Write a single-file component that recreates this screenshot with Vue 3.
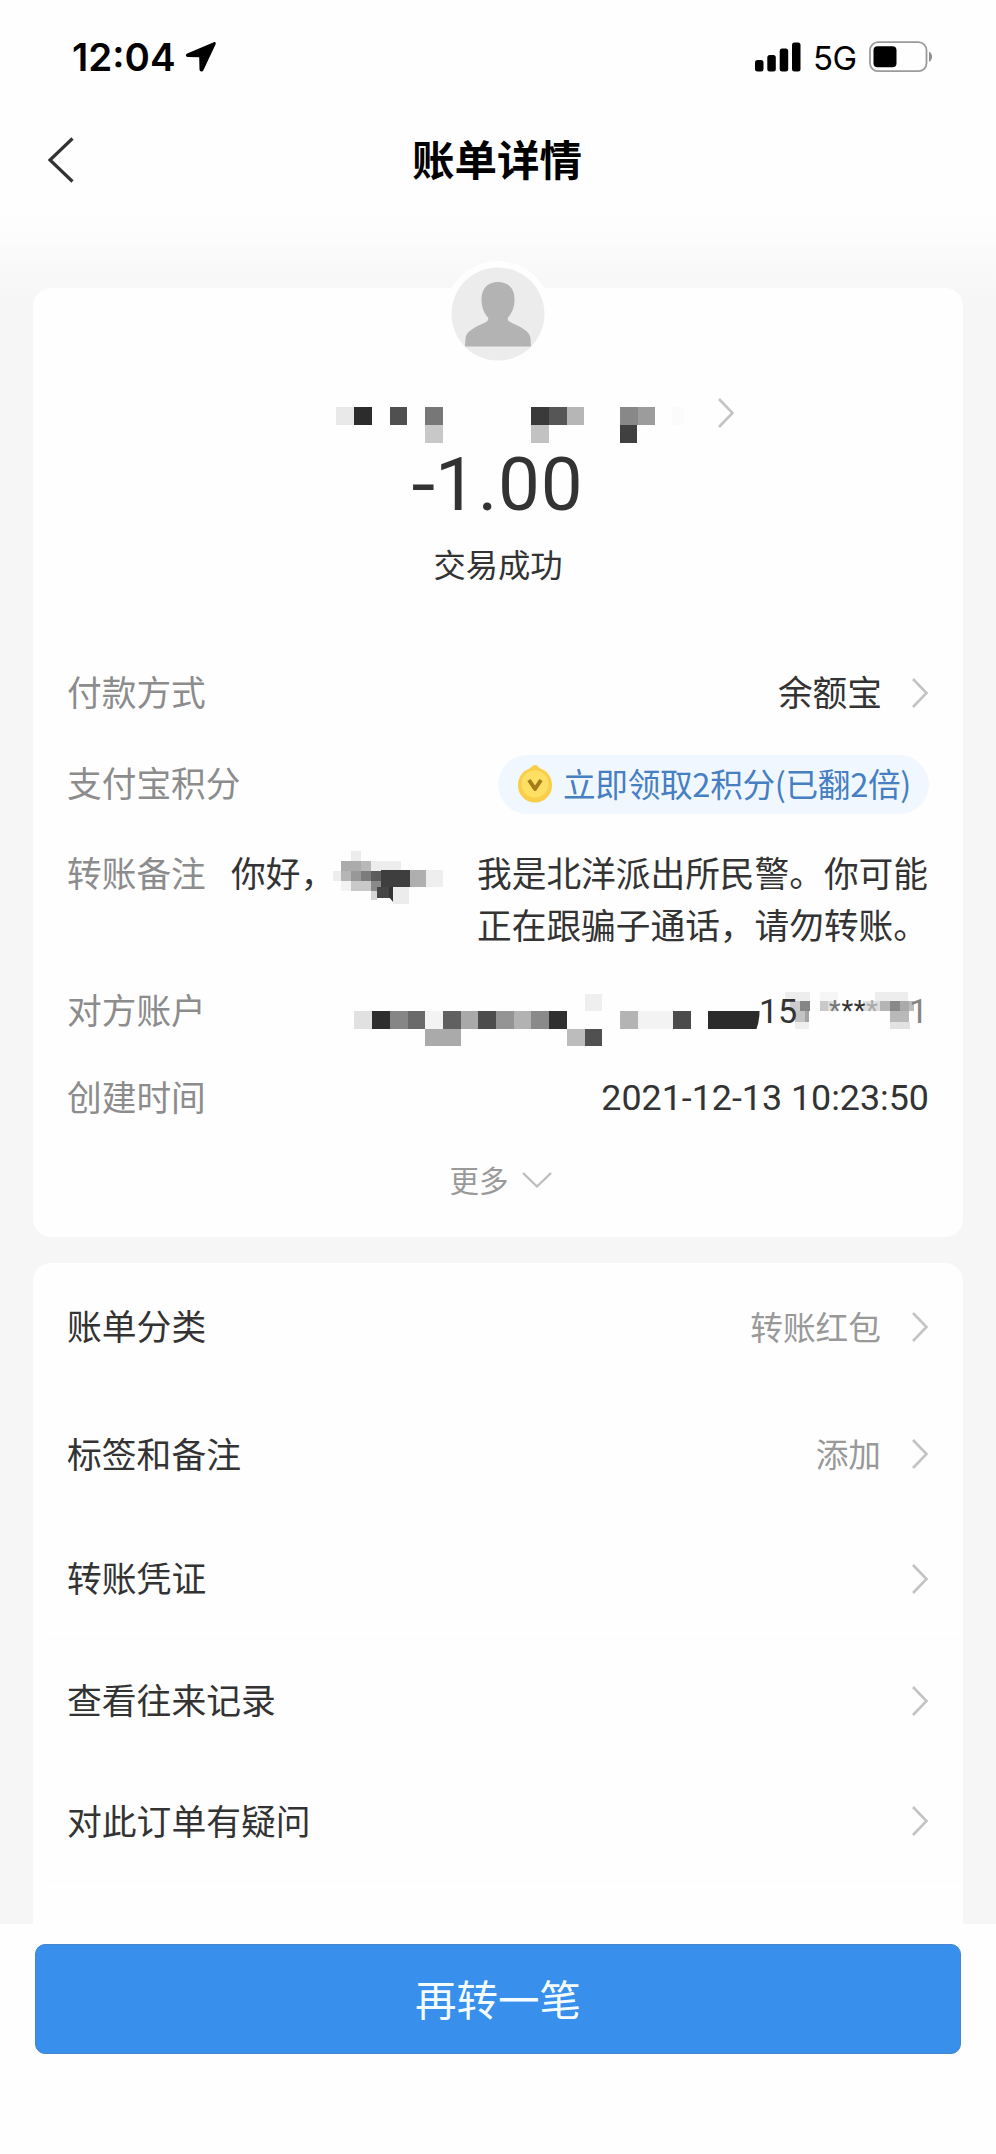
<script setup>
// Each block is [x, y, width, height, fill] inside its mosaic.
const nameBlocks = [
  [0, 0, 18, 18, '#e9e9e9'], [18, 0, 17.5, 18, '#2c2c2c'], [53.5, 0, 17.5, 18, '#505050'],
  [89, 0, 18, 18, '#777777'], [89, 18, 18, 17.5, '#c8c8c8'],
  [195, 0, 18, 18, '#3a3a3a'], [213, 0, 17.5, 18, '#565656'], [230.5, 0, 17.5, 18, '#b6b6b6'],
  [195, 18, 18, 17.5, '#c2c2c2'],
  [283.5, 0, 18, 18, '#888888'], [301.5, 0, 17.5, 18, '#9c9c9c'], [283.5, 18, 17.5, 17.5, '#404040'],
  [336, 0, 12, 18, '#fbfbfb'],
]

const noteBlocks = [
  [18, 0, 10, 10, '#ececec'], [8, 10, 20, 10, '#ababab'], [28, 10, 10, 10, '#b8b8b8'],
  [38, 10, 30, 10, '#ededed'], [0, 20, 8, 10, '#ededed'], [8, 20, 10, 10, '#b5b5b5'],
  [18, 20, 10, 10, '#989898'], [28, 20, 10, 10, '#7c7c7c'], [38, 20, 11, 10, '#5c5c5c'],
  [48, 19, 29, 17, '#3e3e3e'], [77, 19, 16, 17, '#afafaf'], [93, 19, 17, 17, '#eeeeee'],
  [8, 30, 10, 10, '#f2f2f2'], [18, 30, 20, 10, '#c9c9c9'], [38, 30, 10, 10, '#8a8a8a'],
  [38, 40, 6, 9, '#d5d5d5'], [44, 36, 16, 11, '#454545'], [60, 36, 16, 17, '#ececec'],
]

const accountBlocks = [
  [0, 17, 18, 18, '#e1e1e1'], [18, 17, 17.5, 18, '#2e2e2e'], [35.5, 17, 18, 18, '#868686'],
  [53.5, 17, 17.5, 18, '#6a6a6a'], [71, 17, 18, 18, '#f3f3f3'], [89, 17, 17.5, 18, '#606060'],
  [106.5, 17, 17.5, 18, '#a9a9a9'], [124, 17, 18, 18, '#4d4d4d'], [142, 17, 17.5, 18, '#949494'],
  [159.5, 17, 17.5, 18, '#b2b2b2'], [177, 17, 18, 18, '#8a8a8a'], [195, 17, 18, 18, '#303030'],
  [71, 35, 35.5, 17, '#aaaaaa'], [213, 35, 17.5, 17, '#bcbcbc'], [230.5, 35, 17.5, 17, '#505050'],
  [230.5, 0, 17.5, 17, '#efefef'], [266, 17, 17.5, 18, '#b4b4b4'], [283.5, 17, 35.5, 18, '#f3f3f3'],
  [319, 17, 17.5, 18, '#4b4b4b'],
]

const phoneBlocks = [
  [26, 0, 25, 9, '#ededed'], [22, 9, 9, 11, '#f0f0f0'], [31, 9, 10, 10, '#cccccc'],
  [41, 9, 10, 10, '#858585'], [36, 19, 10, 11, '#c4c4c4'], [46, 19, 4, 13, '#a4a4a4'],
  [36, 30, 14, 7, '#eeeeee'],
  [61, 9, 8, 10, '#c9c9c9'], [69, 9, 9, 10, '#dedede'], [61, 0, 18, 9, '#f6f6f6'],
  [104, 9, 17, 10, '#dedede'], [116, 0, 33, 9, '#ededed'], [121, 9, 10, 10, '#b4b4b4'],
  [131, 9, 10, 10, '#888888'], [141, 9, 9, 10, '#aaaaaa'], [150, 9, 5, 10, '#bdbdbd'],
  [131, 19, 19, 11, '#b9b9b9'], [131, 30, 20, 7, '#e2e2e2'],
]

const services = [
  { title: '账单分类', value: '转账红包', size: 'h128' },
  { title: '标签和备注', value: '添加', size: 'h127' },
  { title: '转账凭证', value: '', size: 'h122' },
  { title: '查看往来记录', value: '', size: 'h122' },
  { title: '对此订单有疑问', value: '', size: 'h119' },
]
</script>

<template>
  <div class="screen">
    <header class="status-bar">
      <span class="time">12:04</span>
      <svg class="location" width="32" height="32" viewBox="0 0 32 32">
        <path d="M28.800 1.200 2.200 12.600C.2 13.500.6 16 2.700 16L14.200 16.300 14.500 28.600C14.600 31 17.500 31.200 18.400 29.200L30.600 3.200C31.200 1.700 30.300.600 28.800 1.200Z" />
      </svg>
      <svg class="signal" width="46" height="30" viewBox="0 0 46 30">
        <rect x="0" y="18" width="8.500" height="11.500" rx="2.500" />
        <rect x="12.300" y="13" width="8.500" height="16.500" rx="2.500" />
        <rect x="24.700" y="6.500" width="8.500" height="23" rx="2.500" />
        <rect x="37" y="0.500" width="8.500" height="29" rx="2.500" />
      </svg>
      <span class="network">5G</span>
      <svg class="battery" width="64" height="32" viewBox="0 0 64 32">
        <rect x="1" y="1.200" width="56.500" height="29" rx="8" fill="none" stroke="#9b9b9b" stroke-width="1.800" />
        <rect x="4.500" y="5.300" width="23" height="21" rx="4" fill="#000" />
        <path d="M60 10.500c4 2.200 4 8.300 0 10.500z" fill="#8f8f8f" />
      </svg>
    </header>

    <nav class="nav-bar">
      <svg class="back" width="28" height="48" viewBox="0 0 28 48">
        <path d="M26.500 2.500 4 24l22.500 21.500" fill="none" stroke="#333" stroke-width="3.200" />
      </svg>
      <h1>账单详情</h1>
    </nav>

    <main class="content">
      <section class="card summary">
        <div class="avatar">
          <svg width="94" height="94" viewBox="0 0 94 94">
            <circle cx="47" cy="47" r="46.500" fill="#ececec" />
            <path d="M47 15c-10 0-16.500 6.500-16.500 17 0 9 3 14.500 6.500 18.500 1 3-1 4-5 6-9 4-17 8-17.500 15L14 79.500h66l-.5-8c-.5-7-8.500-11-17.500-15-4-2-6-3-5-6 3.500-4 6.500-9.500 6.500-18.500 0-10.500-6.500-17-16.500-17z" fill="#b3b3b3" />
          </svg>
        </div>

        <div class="payee">
          <svg class="name-mosaic" width="348" height="36" viewBox="0 0 348 36" shape-rendering="crispEdges">
            <rect v-for="(b, i) in nameBlocks" :key="i" :x="b[0]" :y="b[1]" :width="b[2]" :height="b[3]" :fill="b[4]" />
          </svg>
          <svg class="chevron" width="18" height="32" viewBox="0 0 18 32">
            <path d="M2 2 15.500 16 2 30" />
          </svg>
        </div>

        <p class="amount"><span class="minus">-</span>1.00</p>
        <p class="state">交易成功</p>

        <div class="row pay">
          <span class="label">付款方式</span>
          <span class="value">余额宝</span>
          <svg class="chevron" width="18" height="32" viewBox="0 0 18 32">
            <path d="M2 2 15.500 16 2 30" />
          </svg>
        </div>

        <div class="row points">
          <span class="label">支付宝积分</span>
          <span class="pill">
            <svg width="36" height="40" viewBox="0 0 36 40">
              <path d="M18 1c3 0 4 3.500 7.500 4.500C31 7.500 35 14 35 21.500 35 31 27.500 38.500 18 38.500S1 31 1 21.500C1 14 5 7.500 10.500 5.500 14 4.500 15 1 18 1z" fill="#f9cf4a" />
              <circle cx="18" cy="20" r="13.500" fill="#fde063" />
              <path d="M12 16l6 9 6-9" fill="none" stroke="#a77b1c" stroke-width="4" stroke-linejoin="round" />
            </svg>
            <span class="claim">立即领取2积分(已翻2倍)</span>
          </span>
        </div>

        <div class="row note">
          <span class="label">转账备注</span>
          <span class="greeting">你好，</span>
          <svg class="note-mosaic" width="110" height="54" viewBox="0 0 110 54">
            <g shape-rendering="crispEdges">
              <rect v-for="(b, i) in noteBlocks" :key="i" :x="b[0]" :y="b[1]" :width="b[2]" :height="b[3]" :fill="b[4]" />
            </g>
            <path d="M56 36h4v15l-4-5z" fill="#333" />
          </svg>
          <p class="message">我是北洋派出所民警。你可能<br />正在跟骗子通话，请勿转账。</p>
        </div>

        <div class="row account">
          <span class="label">对方账户</span>
          <svg class="account-mosaic" width="406" height="52" viewBox="0 0 406 52">
            <g shape-rendering="crispEdges">
              <rect v-for="(b, i) in accountBlocks" :key="i" :x="b[0]" :y="b[1]" :width="b[2]" :height="b[3]" :fill="b[4]" />
            </g>
            <path d="M354 17h51.500q0 10-3 18H354z" fill="#2b2b2b" />
          </svg>
          <span class="phone">
            <svg class="phone-mosaic" width="170" height="38" viewBox="0 0 170 38" shape-rendering="crispEdges">
              <rect v-for="(b, i) in phoneBlocks" :key="i" :x="b[0]" :y="b[1]" :width="b[2]" :height="b[3]" :fill="b[4]" />
            </svg>
            <span class="head">15</span>
            <span class="stars"><i>*</i>**<i class="pale">*</i></span>
            <span class="tail">1</span>
          </span>
        </div>

        <div class="row created">
          <span class="label">创建时间</span>
          <span class="date">2021-12-13 10:23:50</span>
        </div>

        <div class="more">
          <span>更多</span>
          <svg width="32" height="18" viewBox="0 0 32 18">
            <path d="M2 2l14 13.500L30 2" fill="none" stroke="#bdbdbd" stroke-width="2.300" />
          </svg>
        </div>
      </section>

      <section class="card services">
        <div v-for="s in services" :key="s.title" class="service" :class="s.size">
          <span class="title">{{ s.title }}</span>
          <span class="hint">{{ s.value }}</span>
          <svg class="chevron" width="18" height="32" viewBox="0 0 18 32">
            <path d="M2 2 15.500 16 2 30" />
          </svg>
        </div>
      </section>
    </main>

    <footer class="footer">
      <button type="button">再转一笔</button>
    </footer>
  </div>
</template>

<style>
body {
  margin: 0;
  background: #fefefe;
}
</style>

<style scoped>
.screen {
  width: 996px;
  height: 2154px;
  overflow: hidden;
  display: flex;
  flex-direction: column;
  background: #fefefe;
  color: #333;
  font-family: "Noto Sans CJK SC", sans-serif;
}
svg {
  display: block;
  flex: none;
}
p,
h1 {
  margin: 0;
}
.status-bar {
  height: 114px;
  box-sizing: border-box;
  padding: 0 63px 0 72px;
  display: flex;
  align-items: center;
  color: #000;
  font-family: Inter, sans-serif;
}
.time {
  width: 113px;
  font-size: 38.500px;
  font-weight: 600;
  white-space: nowrap;
}
.signal {
  margin-left: auto;
}
.network {
  width: 44px;
  margin: 2px 12px 0 12px;
  font-size: 33px;
  letter-spacing: -0.500px;
  white-space: nowrap;
}
.nav-bar {
  height: 92px;
  padding: 0 48px 0 46px;
  display: grid;
  grid-template-columns: 28px 1fr 28px;
  align-items: center;
}
.nav-bar h1 {
  padding-bottom: 4px;
  text-align: center;
  color: #000;
  font-size: 42.500px;
  line-height: 60px;
  font-weight: 700;
}
.content {
  height: 1718px;
  box-sizing: border-box;
  padding: 82px 33px 0;
  display: flex;
  flex-direction: column;
  gap: 26px;
  overflow: hidden;
  background: linear-gradient(#fefefe 0, #fcfcfc 38px, #fafafa 39px, #f9f9f9 62px, #f6f6f6 96px, #f6f6f6 100%);
}
.card {
  flex: none;
  background: #fefefe;
  border-radius: 18px;
}
.summary {
  height: 949px;
  display: flex;
  flex-direction: column;
}
.avatar {
  margin: -27px auto 0;
  padding: 6px;
  border-radius: 50%;
  background: #fefefe;
}
.payee {
  height: 62px;
  margin-top: 26px;
  padding-left: 303px;
  display: flex;
  align-items: center;
}
.payee .name-mosaic {
  margin-top: 2px;
}
.payee .chevron {
  margin: -22px 0 0 33px;
}
.chevron path {
  fill: none;
  stroke: #c4c4c4;
  stroke-width: 2.600px;
}
.amount {
  height: 80px;
  margin-top: -10px;
  text-align: center;
  font: 400 74.500px/80px Roboto, sans-serif;
  letter-spacing: 0.800px;
}
.minus {
  display: inline-block;
  margin-right: 1px;
  transform: scaleX(1.150);
}
.state {
  height: 50px;
  margin-top: 13px;
  margin-bottom: 59px;
  text-align: center;
  font-size: 32.300px;
  line-height: 50px;
}
.row {
  box-sizing: border-box;
  padding: 0 34px;
  display: flex;
  align-items: center;
  font-size: 34.700px;
  line-height: 52px;
  white-space: nowrap;
}
.label {
  padding-bottom: 4px;
  color: #8c8c8c;
}
.pay {
  height: 92px;
}
.pay .value {
  margin-left: auto;
  margin-right: 29px;
  padding-bottom: 4px;
}
.points {
  height: 90px;
}
.pill {
  height: 59px;
  box-sizing: border-box;
  margin-left: auto;
  width: 431px;
  padding-left: 19px;
  display: flex;
  align-items: center;
  gap: 10px;
  border-radius: 30px;
  background: #f1f7fe;
  color: #467fc2;
  font-size: 32.700px;
  letter-spacing: -0.350px;
}
.claim {
  padding-bottom: 3px;
}
.note {
  height: 138px;
  padding-top: 17px;
  padding-right: 35px;
  align-items: flex-start;
}
.note .label {
  width: 164px;
}
.greeting {
  width: 102px;
}
.note-mosaic {
  margin-top: 5px;
}
.message {
  margin-left: auto;
}
.account {
  height: 88px;
}
.account-mosaic {
  margin-left: auto;
  margin-right: -1px;
  margin-top: 18px;
}
.phone {
  position: relative;
  width: 170px;
  height: 38px;
  display: flex;
  align-items: center;
  font: 400 34px/38px Roboto, sans-serif;
}
.phone-mosaic {
  position: absolute;
  inset: 0;
}
.phone > span {
  position: relative;
}
.head {
  width: 70px;
}
.phone > .stars {
  width: 80px;
  padding-bottom: 1px;
  font-size: 27px;
  letter-spacing: 0.800px;
}
.stars i {
  font-style: normal;
  color: #777;
}
.stars i.pale {
  color: #ababab;
}
.tail {
  color: #858585;
}
.created {
  height: 86px;
}
.date {
  margin-left: auto;
  padding-bottom: 1px;
  font-family: Roboto, sans-serif;
  font-size: 35.800px;
}
.more {
  height: 80px;
  display: flex;
  align-items: center;
  justify-content: center;
  gap: 12px;
  padding-left: 6px;
  color: #999;
  font-size: 29.500px;
}
.more span {
  padding-bottom: 5px;
}
.more svg {
  margin-bottom: 2px;
}
.service {
  box-sizing: border-box;
  margin: 0 0 0 8px;
  padding: 0 34px 0 26px;
  display: flex;
  align-items: center;
  border-bottom: 1px solid #fcfcfc;
  font-size: 34.800px;
  line-height: 52px;
}
.title {
  padding-bottom: 3px;
}
.services {
  height: 700px;
}
.h128 {
  height: 128px;
}
.h127 {
  height: 127px;
}
.h122 {
  height: 122px;
}
.h119 {
  height: 119px;
}
.hint {
  margin-left: auto;
  margin-right: 30px;
  padding-bottom: 2px;
  color: #999;
  font-size: 32.700px;
}
.footer {
  padding: 20px 35px 0;
}
.footer button {
  display: block;
  width: 926px;
  height: 110px;
  padding: 0 0 2px;
  border: 1px solid #4585c8;
  border-radius: 10px;
  background: #388fec;
  color: #f4fcff;
  font-family: inherit;
  font-size: 41.500px;
  line-height: 106px;
}
</style>
